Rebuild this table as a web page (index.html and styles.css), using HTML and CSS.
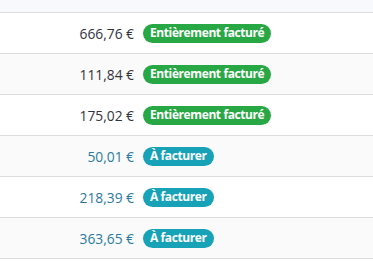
FILE: index.html
```html
<!DOCTYPE html>
<html lang="fr">
<head>
    <meta charset="UTF-8">
    <meta name="viewport" content="width=device-width, initial-scale=1.0">
    <title>Factures</title>
    <link rel="stylesheet" href="styles.css">
</head>
<body>
    <div class="table">
        <div class="table-head"></div>

        <div class="row">
            <span class="amount">666,76 €</span>
            <span class="badge done">Entièrement facturé</span>
        </div>
        <div class="row striped">
            <span class="amount">111,84 €</span>
            <span class="badge done">Entièrement facturé</span>
        </div>
        <div class="row">
            <span class="amount">175,02 €</span>
            <span class="badge done">Entièrement facturé</span>
        </div>
        <div class="row striped">
            <span class="amount todo">50,01 €</span>
            <span class="badge pending">À facturer</span>
        </div>
        <div class="row">
            <span class="amount todo">218,39 €</span>
            <span class="badge pending">À facturer</span>
        </div>
        <div class="row striped">
            <span class="amount todo">363,65 €</span>
            <span class="badge pending">À facturer</span>
        </div>
    </div>
</body>
</html>
```

FILE: styles.css
```css
body {
    font-family: 'Open Sans', 'Noto Sans', Arial, sans-serif;
    background-color: #fff;
    margin: 0;
    padding: 0;
}
.table {
    width: 100%;
}
.table-head {
    height: 12px;
    background: #f8f9fc;
    border-bottom: 1px solid #dcdde1;
}
.row {
    display: grid;
    grid-template-columns: 134px auto;
    column-gap: 9px;
    align-items: center;
    height: 40px;
    border-bottom: 1px solid #dcdde1;
}
.row.striped {
    background: #fafafa;
}
.amount {
    text-align: right;
    font-size: 13.8px;
    color: #33333e;
}
.amount.todo {
    color: #2a7aa0;
}
.badge {
    justify-self: start;
    font-size: 12px;
    font-weight: 700;
    letter-spacing: -0.4px;
    color: #fff;
    padding: 1px 7px 2px;
    border-radius: 10px;
    line-height: 16px;
}
.badge.done {
    background-color: #28a745;
}
.badge.pending {
    background-color: #17a2b8;
}
```
